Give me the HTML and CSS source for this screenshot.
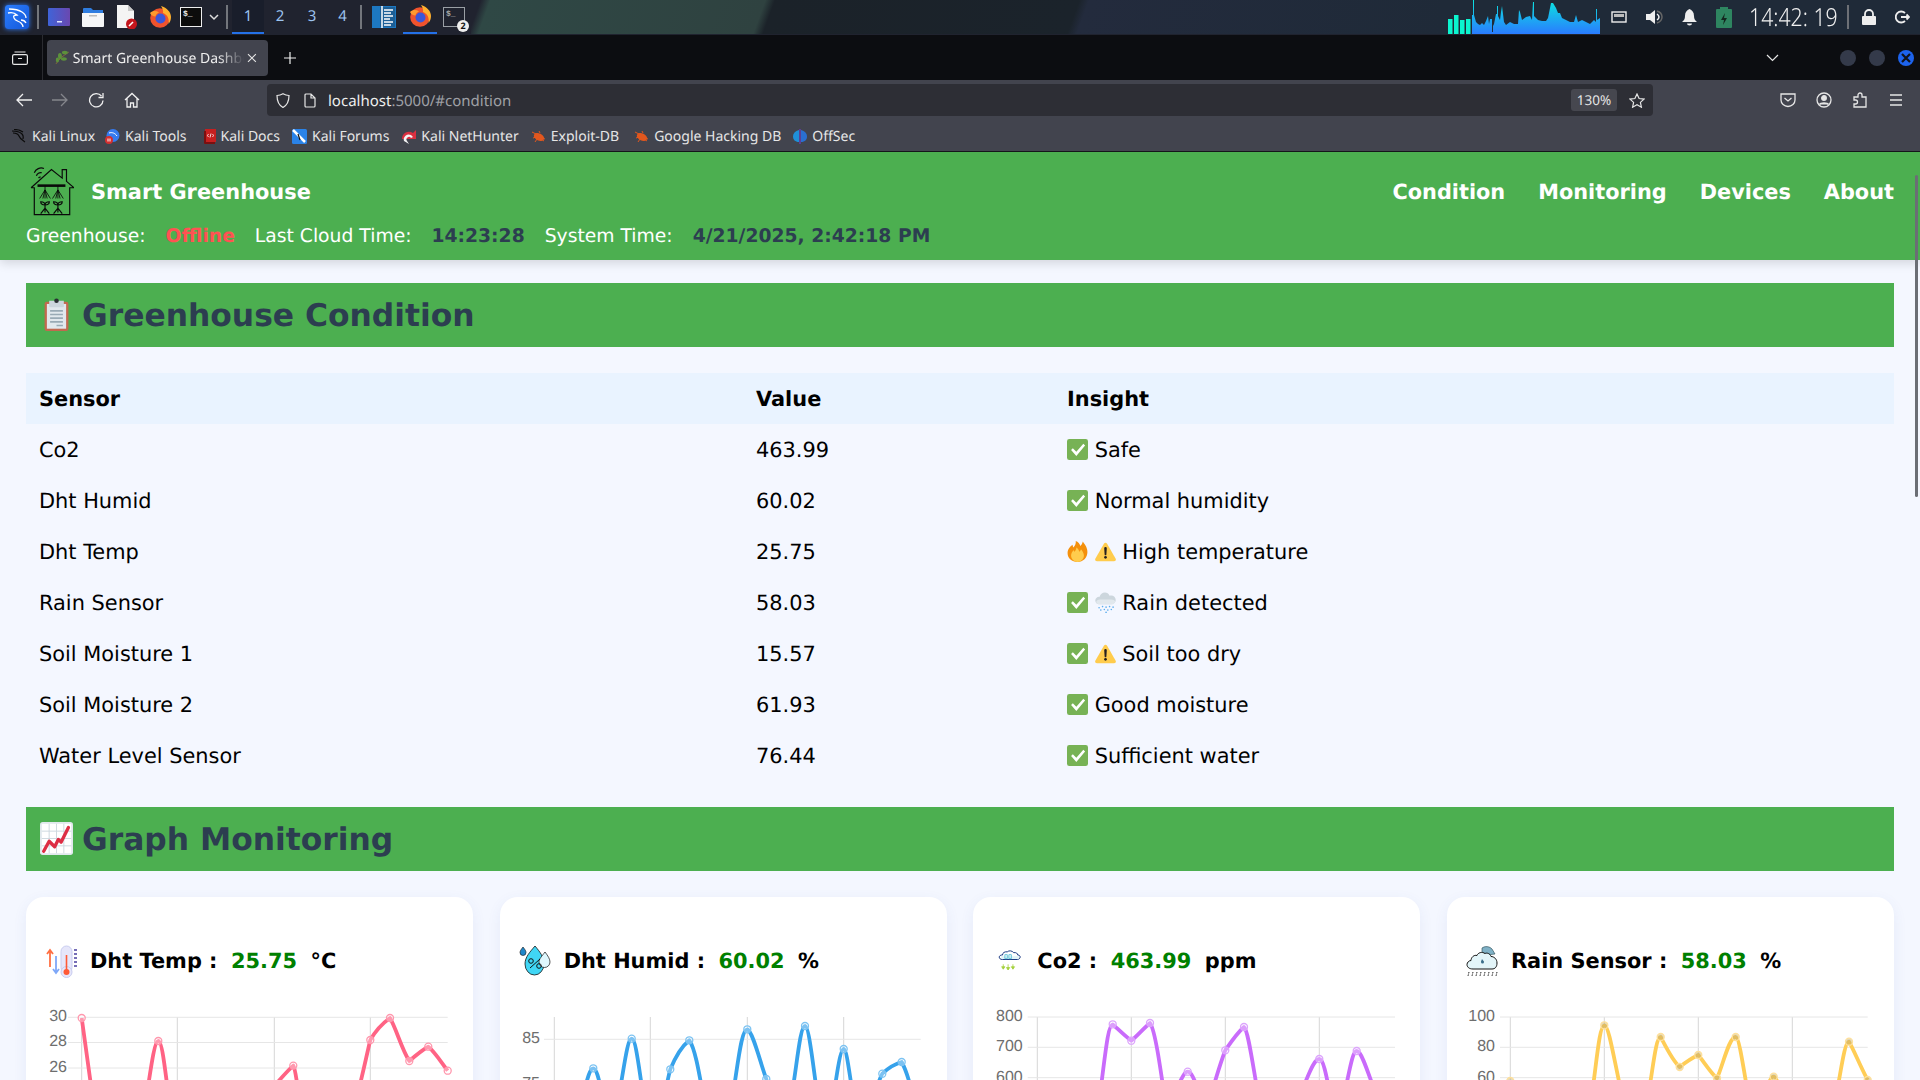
FILE: index.html
```html
<!DOCTYPE html>
<html lang="en">
<head>
<meta charset="utf-8">
<title>Smart Greenhouse Dashboard</title>
<link rel="stylesheet" href="styles.css">
</head>
<body>
<svg class="defs" width="0" height="0" aria-hidden="true">
  <defs>
    <symbol id="e-check" viewBox="0 0 36 36"><rect x="0" y="0" width="36" height="36" rx="4" fill="#77b255"/><path d="M7 19l3-3 6 6L28 8l3 3-15 18z" fill="#fff"/></symbol>
    <symbol id="e-warn" viewBox="0 0 36 36"><path d="M18 3c-1.2 0-2.2.7-3 2L.8 30c-1.4 2.6-.2 4.5 2.6 4.5h29.2c2.8 0 4-1.9 2.6-4.500L21 5c-.8-1.300-1.800-2-3-2z" fill="#ffcc4d"/><path d="M15.800 12.500a2.200 2.200 0 0 1 4.400 0L19.500 23a1.500 1.500 0 0 1-3 0z" fill="#231f20"/><circle cx="18" cy="28" r="2.300" fill="#231f20"/></symbol>
    <symbol id="e-fire" viewBox="0 0 36 36"><path d="M35 19C35 10 29 4 27 1c-.500 3-2 6-4 7.500C22 5 19 1.500 15 0c.500 4-1 8-4 11-1-1.500-1.500-3-1.500-4.500C5 10 1 14 1 21c0 8.500 7.500 15 17 15s17-7 17-17z" fill="#f4900c"/><path d="M29 25c0-5-3-8-5-11-.5 2-1.500 3.500-3 4.500-.5-3-2.500-6-5-7.500 0 3-1.500 5.500-3.500 7.500-.5-1-1-2-1-3C9 18 7 21 7 25c0 6 5 11 11 11s11-5 11-11z" fill="#ffcc4d"/></symbol>
    <symbol id="e-rain" viewBox="0 0 36 36"><path d="M28 6c-1 0-2 .2-3 .5C23.500 2.800 20.500 1 17 1c-4.500 0-8 3-9 7H7c-3.500 0-6.500 3-6.500 6.500S3.500 21 7 21h21c4 0 7.500-3.300 7.500-7.500S32 6 28 6z" fill="#ccd6dd"/><path d="M8 13c-3 0-5.500 2-6 4.500C3 19.600 5 21 7 21h21c3 0 5.700-1.900 6.900-4.500C33.800 14.500 31 13 28 13z" fill="#e1e8ed"/><g fill="#5dadec"><circle cx="7" cy="27" r="1.400"/><circle cx="13" cy="25" r="1.400"/><circle cx="19" cy="26" r="1.400"/><circle cx="25" cy="25" r="1.400"/><circle cx="31" cy="26" r="1.400"/><circle cx="10" cy="31" r="1.400"/><circle cx="16" cy="30" r="1.400"/><circle cx="22" cy="31" r="1.400"/><circle cx="28" cy="30" r="1.400"/><circle cx="19" cy="35" r="1.400"/></g></symbol>
    <symbol id="fox" viewBox="0 0 22 22"><circle cx="11" cy="12" r="9.800" fill="#f0532d"/><circle cx="11.500" cy="12.500" r="5" fill="#3b57d9"/><path d="M12 0c6 2 10 6 10 11 0 3-1 5-2.500 7 1-5-1-9.500-5.500-11 .5-2 -.5-5-2-7z" fill="#ffb02e"/><path d="M1 7c3-2.500 6-2.500 9-.5-2 1-3.500 2.500-3.500 4C4 10.500 2 9 1 7z" fill="#ff9a2e"/></symbol>
    <linearGradient id="spec" x1="0" y1="0" x2="0" y2="1"><stop offset="0" stop-color="#0be6e0"/><stop offset="1" stop-color="#2a7bff"/></linearGradient>
    <linearGradient id="desk" x1="0" x2="1"><stop offset="0" stop-color="#3f63d8"/><stop offset="1" stop-color="#6a48b0"/></linearGradient>
  </defs>
</svg>

<div class="taskbar">
  <div class="tb-left">
    <div class="slot w34"><span class="kali-box"><svg width="24" height="24" viewBox="0 0 24 24" fill="none" stroke="#fff" stroke-width="1.300"><path d="M4 4c5 0 10 1 13 3 3 2 4 5 4 6M3 8c4-1 7 0 9 2-3 0-4 1-3 3 1 3 5 3 7 5 1 1 2 3 2 4M16 15c2 0 4 1 5 3"/></svg></span></div>
    <div class="slot w8"><span class="vsep"></span></div>
    <div class="slot w34"><svg width="22" height="18" viewBox="0 0 22 18"><rect width="22" height="18" rx="1" fill="url(#desk)"/><rect x="9" y="13" width="5" height="1.500" fill="#dfe6ff"/></svg></div>
    <div class="slot w34"><svg width="22" height="20" viewBox="0 0 22 20"><path d="M1 2a1 1 0 0 1 1-1h7l2 2h10v4H1z" fill="#2f7de0"/><path d="M0 6h22v13a1 1 0 0 1-1 1H1a1 1 0 0 1-1-1z" fill="#f5f6f7"/><rect x="7" y="8" width="8" height="1.500" fill="#bbb"/></svg></div>
    <div class="slot w33"><svg width="22" height="24" viewBox="0 0 22 24"><path d="M1 0h11l6 6v17H1z" fill="#f4f4f4"/><path d="M12 0l6 6h-6z" fill="#c9c9c9"/><circle cx="15.500" cy="19" r="5.500" fill="#c4161c"/><path d="M13 21l4-4" stroke="#fff" stroke-width="1.600"/></svg></div>
    <div class="slot w33"><svg width="22" height="22"><use href="#fox"/></svg></div>
    <div class="slot w30"><span class="term">$_</span></div>
    <div class="slot w16"><svg width="10" height="8" viewBox="0 0 10 8" fill="none" stroke="#ddd" stroke-width="1.500"><path d="M1 2l4 4 4-4"/></svg></div>
    <div class="slot w10"><span class="vsep"></span></div>
    <div class="wsp active">1</div>
    <div class="wsp">2</div>
    <div class="wsp">3</div>
    <div class="wsp wsp4">4</div>
    <div class="slot w8"><span class="vsep"></span></div>
    <div class="slot w38"><svg width="24" height="22" viewBox="0 0 24 22"><rect width="24" height="22" fill="#1d78c1"/><rect x="8" y="1" width="15" height="20" fill="#1d5f96"/><path d="M10 0v22" stroke="#fff" stroke-width="1.500"/><path d="M12 4h9M12 7h7M12 10h9M12 13h6M12 16h9M12 19h7" stroke="#fff" stroke-width="1.300"/></svg></div>
    <div class="slot w34 running"><svg width="22" height="22"><use href="#fox"/></svg></div>
    <div class="slot w34 term-group"><span class="term dim">$_</span><span class="badge">2</span></div>
  </div>
  <div class="wall"></div>
  <div class="tb-right">
    <svg class="bars" width="152" height="34" viewBox="1448 0 152 34">
      <g fill="#0bf5cf"><rect x="1448" y="19" width="4.500" height="15"/><rect x="1454" y="15" width="4.500" height="19"/><rect x="1460" y="20" width="4.500" height="14"/><rect x="1466" y="19" width="4.500" height="15"/></g>
      <polygon fill="url(#spec)" points="1472,34 1472,15 1473,15 1473,0 1474,0 1474,15 1476,22 1478,24 1480,25 1482,23 1484,25 1486,21 1488,16 1489,24 1490,19 1492,19 1492,32 1493,32 1493,26 1494,24 1496,14 1497,14 1497,6 1498,6 1498,16 1500,20 1501,12 1502,6 1503,14 1504,22 1506,25 1510,22 1514,24 1518,24 1519,10 1520,12 1522,20 1526,17 1530,16 1532,20 1533,2 1534,2 1534,16 1538,20 1542,21 1546,21 1548,18 1550,8 1551,3 1553,3 1556,8 1558,13 1560,13 1562,18 1566,20 1570,22 1574,22 1576,15 1578,22 1582,20 1586,22 1590,24 1594,20 1596,22 1596,9 1597,9 1597,20 1600,18 1600,34"/>
    </svg>
    <svg class="ti n1" width="16" height="13" viewBox="0 0 16 13"><rect x="1" y="1" width="14" height="10" fill="none" stroke="#eee" stroke-width="1.400"/><path d="M3 3h10v3H3z" fill="#bbb"/></svg>
    <svg class="ti n2" width="18" height="16" viewBox="0 0 18 16"><path d="M0 5h4l5-4v14l-5-4H0z" fill="#eee"/><path d="M11 2c3 1 5 3 5 6s-2 5-5 6" fill="none" stroke="#666" stroke-width="1.500"/><path d="M11 5c1 .7 2 1.700 2 3s-1 2.300-2 3" fill="none" stroke="#eee" stroke-width="1.500"/></svg>
    <svg class="ti n3" width="15" height="17" viewBox="0 0 15 17"><path d="M7.500 0C5 1 3 3 3 7c0 3-1 4-3 6h15c-2-2-3-3-3-6 0-4-2-6-4.500-7z" fill="#eee"/><path d="M5 14.500h5a2.500 2 0 0 1-5 0z" fill="#eee"/></svg>
    <svg class="ti n4" width="16" height="21" viewBox="0 0 16 21"><rect x="0" y="2" width="16" height="19" rx="1" fill="#2e8560"/><rect x="4" y="0" width="8" height="2" fill="#2e8560"/><path d="M9 6l-4 7h3l-1 5 4-7H8z" fill="#14261f"/></svg>
    <span class="clock">14:42: 19</span>
    <span class="tsep"></span>
    <svg class="ti n5" width="14" height="16" viewBox="0 0 14 16"><rect y="7" width="14" height="9" rx="1" fill="#eee"/><path d="M3 7V5a4 4 0 0 1 8 0v2" fill="none" stroke="#eee" stroke-width="1.800"/></svg>
    <svg class="ti n6" width="15" height="14" viewBox="0 0 15 14" fill="none" stroke="#eee" stroke-width="1.800"><path d="M10 3a5.500 5.500 0 1 0 0 8"/><path d="M6 7h8M11.500 4.500L14 7l-2.500 2.500"/></svg>
  </div>
</div>

<div class="tabbar">
  <svg class="tabs-ico" width="16" height="14" viewBox="0 0 16 14" fill="none" stroke="#e6e6e6" stroke-width="1.200"><rect x=".6" y="3.600" width="14.800" height="9.800" rx="1.500"/><path d="M2.500 1h11M6 7.500h4"/></svg>
  <span class="tab-sep"></span>
  <div class="tab">
    <svg width="15" height="15" viewBox="0 0 15 15"><path d="M1 14C4 9 8 6 14 2" stroke="#8a6d3b" stroke-width="1" fill="none"/><g fill="#5c913b"><ellipse cx="5" cy="6" rx="2" ry="3"/><ellipse cx="10" cy="2.500" rx="3" ry="1.800"/><ellipse cx="9" cy="9" rx="3" ry="1.700"/><ellipse cx="2.500" cy="10" rx="1.700" ry="2.500"/></g></svg>
    <span class="tab-title">Smart Greenhouse Dashboard</span>
    <svg width="10" height="10" viewBox="0 0 10 10" stroke="#e6e6e6" stroke-width="1.100"><path d="M1 1l8 8M9 1l-8 8"/></svg>
  </div>
  <svg class="plus" width="12" height="12" viewBox="0 0 12 12" stroke="#f0f0f0" stroke-width="1.200"><path d="M6 0v12M0 6h12"/></svg>
  <div class="tab-right">
    <svg class="tab-chev" width="13" height="8" viewBox="0 0 13 8" fill="none" stroke="#e6e6e6" stroke-width="1.200"><path d="M1 1l5.500 5.500L12 1"/></svg>
    <span class="wbtn"></span>
    <span class="wbtn"></span>
    <span class="wbtn close"><svg width="10" height="10" viewBox="0 0 10 10" stroke="#10131a" stroke-width="2.200"><path d="M1 1l8 8M9 1l-8 8"/></svg></span>
  </div>
</div>

<div class="toolbar">
  <div class="nav-btns">
    <svg width="36" height="16" viewBox="0 0 36 16" fill="none" stroke="#f0f0f0" stroke-width="1.300"><path d="M26 8H11M17 2l-6 6 6 6"/></svg>
    <svg width="36" height="16" viewBox="0 0 36 16" fill="none" stroke="#85868c" stroke-width="1.300"><path d="M10 8h15M19 2l6 6-6 6"/></svg>
    <svg width="36" height="16" viewBox="0 0 36 16" fill="none" stroke="#f0f0f0" stroke-width="1.300"><path d="M23.500 4A6.700 6.700 0 1 0 25 8.500M25 1v4.500h-4.500"/></svg>
    <svg width="36" height="16" viewBox="0 0 36 16" fill="none" stroke="#f0f0f0" stroke-width="1.300"><path d="M11 8l7-6.500L25 8M13 6.500V15h3.500v-4h3v4H23V6.500"/></svg>
  </div>
  <div class="urlbar">
    <svg class="u-shield" width="14" height="15" viewBox="0 0 14 15" fill="none" stroke="#e6e6e6" stroke-width="1.200"><path d="M7 .8C5 2 3 2.500 1 2.500c0 6 1.500 9.500 6 12 4.500-2.500 6-6 6-12C11 2.500 9 2 7 .8z"/></svg>
    <svg class="u-doc" width="12" height="15" viewBox="0 0 12 15" fill="none" stroke="#e6e6e6" stroke-width="1.200"><path d="M1 2a1 1 0 0 1 1-1h5l4 4v8a1 1 0 0 1-1 1H2a1 1 0 0 1-1-1zM7 1v4h4"/></svg>
    <span class="u-text">localhost<span class="u-dim">:5000/#condition</span></span>
    <span class="zoomchip">130%</span>
    <svg class="u-star" width="16" height="15" viewBox="0 0 16 15" fill="none" stroke="#e6e6e6" stroke-width="1.200"><path d="M8 1l2.100 4.500 4.900.6-3.600 3.300 1 4.800L8 11.800 3.600 14.200l1-4.800L1 6.100l4.900-.6z"/></svg>
  </div>
  <div class="tool-right">
    <svg width="36" height="16" viewBox="0 0 36 16" fill="none" stroke="#e6e6e6" stroke-width="1.300"><path d="M11 2h14v6a7 6.500 0 0 1-14 0zM14.500 6l3.500 3 3.500-3"/></svg>
    <svg width="36" height="16" viewBox="0 0 36 16" fill="none" stroke="#e6e6e6" stroke-width="1.300"><circle cx="18" cy="8" r="7"/><circle cx="18" cy="6" r="2.300" fill="#e6e6e6"/><path d="M13.500 12.500c1-2 8-2 9 0" fill="#e6e6e6"/></svg>
    <svg width="36" height="16" viewBox="0 0 36 16" fill="none" stroke="#e6e6e6" stroke-width="1.300"><path d="M12 5h4V3a2 2 0 0 1 4 0v2h4v10H12v-3h1.500a2 2 0 0 0 0-4H12z"/></svg>
    <svg width="36" height="16" viewBox="0 0 36 16" fill="none" stroke="#e6e6e6" stroke-width="1.300"><path d="M12 3h12M12 8h12M12 13h12"/></svg>
  </div>
</div>

<div class="bookmarks">
  <span class="bm bm1"><svg width="15" height="15" viewBox="0 0 15 15" fill="none" stroke="#0b0b0b" stroke-width="1.200"><path d="M0 2c4 0 8 1 10 3 2 2 1 4 1 5M1 4c3 0 5 1 6 3 1 3 3 4 6 6M2 .5C5 .5 8 1 11 3"/></svg>Kali Linux</span>
  <span class="bm bm2"><svg width="15" height="15" viewBox="0 0 15 15"><circle cx="8" cy="6.500" r="6.500" fill="#367bf0"/><path d="M4 4c3-1 6 0 8 3" stroke="#fff" fill="none"/><circle cx="4" cy="11" r="4" fill="#d32f2f"/><path d="M3 9.500v3M5 9.500v3" stroke="#fff"/></svg>Kali Tools</span>
  <span class="bm bm3"><svg width="12" height="15" viewBox="0 0 12 15"><path d="M1 0h11v13H1z" fill="#c62020"/><path d="M0 2v12a1 1 0 0 0 1 1h10v-2H2V2z" fill="#7a1010"/><path d="M4.500 5L3.500 6.500 4.500 8M8.500 5l1 1.500-1 1.500M7 4.500L6 8.500" stroke="#fff" stroke-width=".8" fill="none"/></svg>Kali Docs</span>
  <span class="bm bm4"><svg width="15" height="15" viewBox="0 0 15 15"><rect width="15" height="15" rx="1.500" fill="#2a83e8"/><path d="M1 1l12 12" stroke="#fff" stroke-width="2.500"/><path d="M6 5l2 6" stroke="#111" stroke-width="1.200"/></svg>Kali Forums</span>
  <span class="bm bm5"><svg width="15" height="15" viewBox="0 0 15 15"><path d="M1 10a7 7 0 0 1 11-6l3-3v9z" fill="#d93040"/><path d="M3 12a5 5 0 0 1 7-6l2 2-2 1a2.500 2.500 0 0 0-4 3l2 3z" fill="#f4f4f4"/></svg>Kali NetHunter</span>
  <span class="bm bm6"><svg width="14" height="13" viewBox="0 0 14 13"><ellipse cx="7" cy="7" rx="5.500" ry="3.500" fill="#e2571e" transform="rotate(25 7 7)"/><path d="M0 2l4 2M1 8l3-1M3 12l2-3M12 11L9 9M7 1l1 2M13 9l-3-1" stroke="#e2571e"/></svg>Exploit-DB</span>
  <span class="bm bm7"><svg width="14" height="13" viewBox="0 0 14 13"><ellipse cx="7" cy="7" rx="5.500" ry="3.500" fill="#e2571e" transform="rotate(25 7 7)"/><path d="M0 2l4 2M1 8l3-1M3 12l2-3M12 11L9 9M7 1l1 2M13 9l-3-1" stroke="#e2571e"/></svg>Google Hacking DB</span>
  <span class="bm bm8"><svg width="14" height="15" viewBox="0 0 14 15"><path d="M6 1C2 2 0 4.500 0 7.500S2 13 6 13z" fill="#1f8fd8"/><path d="M8 1c4 1 6 3.500 6 6.500S12 13 8 13z" fill="#2a6fd0"/><path d="M7 0v15" stroke="#6c3fc4" stroke-width="1.200"/></svg>OffSec</span>
</div>

<div class="page">
  <header class="site-head">
    <div class="head-top">
      <div class="brand">
        <svg class="logo" width="44" height="52" viewBox="2 4 41 46" fill="none" stroke="#0a0a0a" stroke-width="1.100">
          <path d="M3 24L22 7l10 8V7h4v11l7 6M3 24h3v25h33V24h4"/>
          <path d="M9 22h26" stroke-width="2.400"/>
          <path d="M16 22v4M28 22v4M16 26l-5 8M16 26l-2 8M16 26v8M16 26l2 8M16 26l5 8M28 26l-5 8M28 26l-2 8M28 26v8M28 26l2 8M28 26l5 8" stroke-width=".8"/>
          <path d="M16 38v9M28 38v9M12 48l4-5 4 5M24 48l4-5 4 5M16 40c-2 0-4-1-4-3 2 0 4 1 4 3zM16 40c2 0 4-1 4-3-2 0-4 1-4 3zM28 40c-2 0-4-1-4-3 2 0 4 1 4 3zM28 40c2 0 4-1 4-3-2 0-4 1-4 3z"/>
          <path d="M6 10a7 7 0 0 1 9-4M8 13a4 4 0 0 1 5-3M10 15a2 2 0 0 1 2-1"/>
        </svg>
        <span class="brand-name">Smart Greenhouse</span>
      </div>
      <nav class="site-nav"><a>Condition</a><a>Monitoring</a><a>Devices</a><a>About</a></nav>
    </div>
    <div class="status">
      <span>Greenhouse:</span><b class="offline">Offline</b>
      <span>Last Cloud Time:</span><b>14:23:28</b>
      <span>System Time:</span><b>4/21/2025, 2:42:18 PM</b>
    </div>
  </header>

  <main class="content">
    <h2 class="sect">
      <svg class="h-emo" width="33" height="33" viewBox="0 0 36 36"><rect x="5" y="4" width="26" height="32" rx="2.500" fill="#c1694f"/><rect x="7.500" y="6.500" width="21" height="27" fill="#e1e8ed"/><path d="M11 14h14M11 18h14M11 22h14M11 26h14M18 30h7" stroke="#99aab5" stroke-width="1.800"/><path d="M10 3h16v6a1 1 0 0 1-1 1H11a1 1 0 0 1-1-1z" fill="#ccd6dd"/><circle cx="18" cy="3" r="2.500" fill="#292f33"/></svg>
      Greenhouse Condition
    </h2>
    <table class="sensors">
      <thead><tr><th class="c1">Sensor</th><th class="c2">Value</th><th>Insight</th></tr></thead>
      <tbody>
        <tr><td>Co2</td><td>463.99</td><td><svg class="emo"><use href="#e-check"/></svg> Safe</td></tr>
        <tr><td>Dht Humid</td><td>60.02</td><td><svg class="emo"><use href="#e-check"/></svg> Normal humidity</td></tr>
        <tr><td>Dht Temp</td><td>25.75</td><td><svg class="emo"><use href="#e-fire"/></svg> <svg class="emo"><use href="#e-warn"/></svg> High temperature</td></tr>
        <tr><td>Rain Sensor</td><td>58.03</td><td><svg class="emo"><use href="#e-check"/></svg> <svg class="emo"><use href="#e-rain"/></svg> Rain detected</td></tr>
        <tr><td>Soil Moisture 1</td><td>15.57</td><td><svg class="emo"><use href="#e-check"/></svg> <svg class="emo"><use href="#e-warn"/></svg> Soil too dry</td></tr>
        <tr><td>Soil Moisture 2</td><td>61.93</td><td><svg class="emo"><use href="#e-check"/></svg> Good moisture</td></tr>
        <tr><td>Water Level Sensor</td><td>76.44</td><td><svg class="emo"><use href="#e-check"/></svg> Sufficient water</td></tr>
      </tbody>
    </table>

    <h2 class="sect">
      <svg class="h-emo" width="33" height="33" viewBox="0 0 36 36"><rect width="36" height="36" rx="3" fill="#e1e8ed"/><rect x="2" y="2" width="32" height="32" fill="#fff"/><path d="M2 10h32M2 18h32M2 26h32M10 2v32M18 2v32M26 2v32" stroke="#ccd6dd" stroke-width="1"/><path d="M4 32l6-11 6 6 4-8 3 3 8-16" fill="none" stroke="#dd2e44" stroke-width="3.600" stroke-linejoin="round" stroke-linecap="round"/></svg>
      Graph Monitoring
    </h2>

    <div class="cards">
      <section class="card">
        <div class="card-title">
          <svg class="c-ico" width="33" height="33" viewBox="-2 0 33 33"><path d="M3 22V6M0 9l3-4 3 4" fill="none" stroke="#ff7043" stroke-width="1.800"/><path d="M9 11v16M6 24l3 4 3-4" fill="none" stroke="#7fa8f8" stroke-width="1.800"/><rect x="14" y="1" width="11" height="27" rx="5.500" fill="#e6e6fa" stroke="#c9cdf0"/><circle cx="19.500" cy="27" r="5.500" fill="#e6e6fa" stroke="#c9cdf0"/><circle cx="19.500" cy="27" r="3" fill="#ff5a36"/><path d="M19.500 10v16" stroke="#ff5a36" stroke-width="1.600"/><path d="M27 5h3M27 9h3M27 13h3M27 17h3M27 21h3" stroke="#4a3fa0" stroke-width="1.500"/></svg>
          <span class="ct-name">Dht Temp :</span><span class="ct-val">25.75</span><span class="ct-name">°C</span>
        </div>
        <svg class="chart" viewBox="0 0 447 80" width="447" height="80">
          <path class="gv" d="M55.700 17V80M151.300 17V80M248.300 17V80M344.300 17V80"/>
          <path class="gh" d="M42 17.300H421.700M42 42.500H421.700M42 68H421.700"/>
          <g class="lbl lbl-e"><text x="41" y="21">30</text><text x="41" y="46">28</text><text x="41" y="71.500">26</text></g>
          <path class="ln l-pink" d="M55.700 18L67 100M120 100C124 75 128 41 132.300 41C136 41 139 68 143 100M243 92C252 82 260 72 267.300 65.600C269 68 270 75 272 90M330 100C336 78 340 58 344.300 40C350 30 357 23 364 18C370 28 376 50 383.300 61C389 56 396 50 402.300 46.700C409 52 415 62 421.700 70.700"/>
          <g class="pts p-pink"><circle cx="55.700" cy="18" r="3.500"/><circle cx="132.300" cy="41" r="3.500"/><circle cx="267.300" cy="65.600" r="3.500"/><circle cx="344.300" cy="40" r="3.500"/><circle cx="364" cy="18" r="3.500"/><circle cx="383.300" cy="61" r="3.500"/><circle cx="402.300" cy="46.700" r="3.500"/><circle cx="421.700" cy="70.700" r="3.500"/></g>
        </svg>
      </section>

      <section class="card">
        <div class="card-title">
          <svg class="c-ico" width="33" height="33" viewBox="0 0 33 33"><path d="M4 2c2 2.500 3 4 3 5.500a3 3 0 0 1-6 0C1 6 2 4.500 4 2z" fill="#1f86c9" stroke="#111" stroke-width=".6"/><path d="M16 1c5 6 9 11 9 18a9.500 11 0 0 1-19 0C6 12 11 7 16 1z" fill="#40d6f5" stroke="#111" stroke-width=".8"/><path d="M26 7c3 4 5 7 5 10a5.500 5.500 0 0 1-11 0c0-3 3-6 6-10z" fill="#dff7fd" stroke="#111" stroke-width=".7"/><path d="M11 23l10-9" stroke="#111"/><circle cx="12" cy="16" r="2.300" fill="none" stroke="#111"/><circle cx="20" cy="21" r="2.300" fill="none" stroke="#111"/></svg>
          <span class="ct-name">Dht Humid :</span><span class="ct-val">60.02</span><span class="ct-name">%</span>
        </div>
        <svg class="chart" viewBox="0 0 447 80" width="447" height="80">
          <path class="gv" d="M54.300 17V80M150.300 17V80M247.300 17V80M343.700 17V80"/>
          <path class="gh" d="M44 39.300H420.700"/>
          <g class="lbl lbl-e"><text x="40" y="43">85</text><text x="40" y="88">75</text></g>
          <path class="ln l-blue" d="M82 100C86 85 89 68.300 93.300 68.300C97 68.300 100 85 104 100M118 100C124 70 127 38.700 131.700 38.700C136 38.700 139 70 144 100M164 100C166 88 168 78 170.300 69.300C175 58 181 47 189.300 40.300C195 48 199 72 204 100M232 100C238 65 241 29.300 247.300 29.300C253 32 260 62 266.300 79C268 85 270 95 271 100M291 100C297 65 300 26 305 26C309 26 313 65 318 100M333 100C336 80 340 49 343.700 49C347 49 350 80 354 100M374 100C376 90 379 80 382.300 73.700C388 68 395 64 401.700 62C405 68 408 76 412 92"/>
          <g class="pts p-blue"><circle cx="93.300" cy="68.300" r="3.500"/><circle cx="131.700" cy="38.700" r="3.500"/><circle cx="170.300" cy="69.300" r="3.500"/><circle cx="189.300" cy="40.300" r="3.500"/><circle cx="247.300" cy="29.300" r="3.500"/><circle cx="266.300" cy="79" r="3.500"/><circle cx="305" cy="26" r="3.500"/><circle cx="343.700" cy="49" r="3.500"/><circle cx="382.300" cy="73.700" r="3.500"/><circle cx="401.700" cy="62" r="3.500"/></g>
        </svg>
      </section>

      <section class="card">
        <div class="card-title">
          <svg class="c-ico" width="33" height="33" viewBox="-5 -3 41 41"><path d="M8 15c-3 0-4-1.500-4-3s2-3 4-2.500c0-3 3-4.500 6-4 2-2 6-1.500 8 1 3-.5 5 1 5 3 2 0 3 1 3 2.500s-1.500 3-3.500 3z" fill="#fff" stroke="#16357f" stroke-width="1.200"/><path d="M6 11h22v3H7z" fill="#dff3f8"/><path d="M11 9h3v5h-3zM16 9h3v5h-3z" fill="none" stroke="#45b7d0" stroke-width="1"/><path d="M9 21v6M15 21v7M21 21v6M9 27l-2-3h4zM15 28l-2-3h4zM21 27l-2-3h4z" fill="#a6d13d" stroke="#a6d13d" stroke-width="1"/></svg>
          <span class="ct-name">Co2 :</span><span class="ct-val">463.99</span><span class="ct-name">ppm</span>
        </div>
        <svg class="chart" viewBox="0 0 447 80" width="447" height="80">
          <path class="gv" d="M64.300 17V80M158.300 17V80M252.300 17V80M346.300 17V80"/>
          <path class="gh" d="M54.700 17H422M54.700 47.300H422M54.700 77.700H422"/>
          <g class="lbl lbl-e"><text x="49.700" y="20.500">800</text><text x="49.700" y="51">700</text><text x="49.700" y="81.500">600</text></g>
          <path class="ln l-purple" d="M126 100C131 70 134 24.300 139.700 24.300C146 30 152 36 158.300 40.700C164 36 170 29 177 23C182 30 187 65 192 100M203 90C207 82 211 71.700 214.700 71.700C218 71.700 221 78 226 92M238 95C243 78 247 64 252.300 50.300C258 42 264 33 271 27C275 30 279 60 286 100M328 92C334 80 340 59 346.300 59C350 59 353 72 358 100M371 95C376 75 379 51 383.700 51C388 51 393 66 402 92"/>
          <g class="pts p-purple"><circle cx="139.700" cy="24.300" r="3.500"/><circle cx="158.300" cy="40.700" r="3.500"/><circle cx="177" cy="23" r="3.500"/><circle cx="214.700" cy="71.700" r="3.500"/><circle cx="252.300" cy="50.300" r="3.500"/><circle cx="271" cy="27" r="3.500"/><circle cx="346.300" cy="59" r="3.500"/><circle cx="383.700" cy="51" r="3.500"/></g>
        </svg>
      </section>

      <section class="card">
        <div class="card-title">
          <svg class="c-ico" width="33" height="33" viewBox="0 0 33 33"><path d="M16 3c3-2 7-2 10 1l3 5-8 1-5-3z" fill="#7fb1c6" stroke="#26464f" stroke-width=".6"/><path d="M7 24c-4 0-6-2-6-4.500 0-2 2-4 4-4 0-3 3-6 6-5 1-3 5-4 8-2 2-1 5 0 6 3 3 0 6 2.500 6 6.500s-2 6-5 6z" fill="#e3f5f9" stroke="#111" stroke-width="1"/><path d="M16 14c1 1.500 2 2 2 3a1.500 1.500 0 0 1-3 0c0-1 .5-1.500 1-3z" fill="#3b6e8a"/><path d="M3 27l-1 4M7 27l-1 4M11 27l-1 4M15 27l-1 4M19 27l-1 4M23 27l-1 4M27 27l-1 4M31 27l-1 4" stroke="#222" stroke-width="1" stroke-dasharray="1.500 1"/></svg>
          <span class="ct-name">Rain Sensor :</span><span class="ct-val">58.03</span><span class="ct-name">%</span>
        </div>
        <svg class="chart" viewBox="0 0 447 80" width="447" height="80">
          <path class="gv" d="M63.300 17V80M157.300 17V80M251.300 17V80M345.300 17V80"/>
          <path class="gh" d="M53 17H420.700M53 47.300H420.700M53 77.700H420.700"/>
          <g class="lbl lbl-e"><text x="48" y="20.500">100</text><text x="48" y="51">80</text><text x="48" y="81.500">60</text></g>
          <path class="ln l-yellow" d="M144 100C149 70 152 25.300 157.300 25.300C162 25.300 167 60 176 100M200 100C205 80 208 37 213.700 37C218 45 225 60 232.700 67C239 62 245 58 251.300 55C257 62 263 72 270 78.300C276 65 282 37 288.700 37C292 37 296 65 302 100M318 92C321 84 324 76.700 326.700 76.700C329 76.700 332 84 335 92M388 100C393 80 397 41.700 402 41.700C407 50 413 66 420.700 80"/>
          <g class="pts p-yellow"><circle cx="63.300" cy="81" r="3.500"/><circle cx="157.300" cy="25.300" r="3.500"/><circle cx="213.700" cy="37" r="3.500"/><circle cx="232.700" cy="67" r="3.500"/><circle cx="251.300" cy="55" r="3.500"/><circle cx="270" cy="78.300" r="3.500"/><circle cx="288.700" cy="37" r="3.500"/><circle cx="326.700" cy="76.700" r="3.500"/><circle cx="402" cy="41.700" r="3.500"/><circle cx="420.700" cy="80" r="3.500"/></g>
        </svg>
      </section>
    </div>
  </main>
  <div class="scrollthumb"></div>
</div>
</body>
</html>
```

FILE: styles.css
```css
* { box-sizing: border-box; }
html, body { margin: 0; height: 100%; overflow: hidden; }
body { background: #f4f7ff; font-family: "DejaVu Sans", sans-serif; color: #000; display: flex; flex-direction: column; text-rendering: geometricPrecision; }
.defs { position: absolute; }

/* taskbar */
.taskbar { display: flex; height: 35px; flex: none; background: #20232f; font-family: "Noto Sans", sans-serif; }
.tb-left { display: flex; height: 34px; flex: none; }
.slot { display: flex; align-items: center; justify-content: center; height: 34px; position: relative; }
.w8 { width: 8px; } .w10 { width: 10px; } .w16 { width: 16px; } .w30 { width: 30px; }
.w33 { width: 33px; } .w34 { width: 34px; } .w38 { width: 38px; }
.kali-box { width: 24px; height: 24px; border-radius: 3px; background: linear-gradient(135deg, #2a7dff, #1558d8); box-shadow: 0 0 5px #2f7dff; display: flex; }
.vsep { width: 2px; height: 24px; background: #73767c; }
.term { width: 22px; height: 20px; background: #0c0c0c; border: 1px solid #eee; color: #eee; font: 700 8px/14px "Liberation Mono", monospace; padding-left: 2px; }
.term.dim { background: transparent; border-color: #9a9fa5; color: #aaa; }
.term-group { justify-content: flex-start; padding-left: 6px; }
.badge { position: absolute; left: 20px; top: 20px; width: 12px; height: 12px; border-radius: 50%; background: #eee; color: #111; font: 700 9px/12px "Noto Sans", sans-serif; text-align: center; }
.wsp { width: 32px; height: 34px; color: #9dc4f0; font-size: 15px; line-height: 33px; text-align: center; }
.wsp.active { background: #191e2b; border-bottom: 2px solid #2471e8; }
.wsp4 { width: 29px; }
.running { border-bottom: 2px solid #2471e8; }
.wall { flex: 1; height: 34px; background: linear-gradient(110deg, #20232f 0, #20232f 1%, #2f4845 2%, #2f4240 30%, #1b2229 31%, #1b232b 62%, #232b3d 63%, #1f2a38 100%); }
.tb-right { display: flex; align-items: center; height: 34px; width: 480px; flex: none; background: #1f2a38; padding: 0 8px 0 8px; position: relative; }
.bars { flex: none; align-self: flex-start; }
.ti { flex: none; }
.n1 { margin-left: 11px; } .n2 { margin-left: 19px; } .n3 { margin-left: 18px; } .n4 { margin-left: 19px; }
.n5 { margin-left: 13px; } .n6 { margin-left: 19px; }
.clock { width: 86px; margin-left: 17px; flex: none; color: #f0f0f0; font: 300 25px/34px "Noto Sans", sans-serif; white-space: nowrap; transform: scaleX(.85); transform-origin: 0 50%; }
.tsep { width: 2px; height: 24px; background: #6d7076; margin-left: 12px; flex: none; }

/* tabs */
.tabbar { display: flex; align-items: center; height: 45px; flex: none; background: #0c0d11; position: relative; font-family: "Noto Sans", sans-serif; }
.tabs-ico { margin-left: 12px; }
.tab-sep { width: 1px; height: 45px; background: #2a2b30; margin-left: 14px; }
.tab { display: flex; align-items: center; width: 221px; height: 36px; margin-left: 4px; padding: 0 11px 0 8px; background: #42444e; border-radius: 4px; gap: 3px; color: #eee; font-size: 14px; }
.tab-title { width: 174px; padding-top: 1px; overflow: hidden; white-space: nowrap; -webkit-mask-image: linear-gradient(90deg, #000 85%, transparent); mask-image: linear-gradient(90deg, #000 85%, transparent); }
.plus { margin-left: 16px; }
.tab-right { margin-left: auto; display: flex; align-items: center; gap: 13px; padding-right: 6px; }
.tab-chev { margin-right: 48px; }
.wbtn { width: 16px; height: 16px; border-radius: 50%; background: #343a4a; display: flex; align-items: center; justify-content: center; }
.wbtn.close { background: #1d63ed; }

/* toolbar */
.toolbar { display: flex; height: 44px; flex: none; background: #42444e; padding: 4px 0 0 6px; font-family: "Noto Sans", sans-serif; }
.nav-btns { display: flex; align-items: center; height: 32px; width: 261px; flex: none; }
.urlbar { display: flex; align-items: center; width: 1386px; height: 32px; background: #2d2e35; border-radius: 4px; color: #eee; font-size: 15px; padding: 0 6px 0 9px; flex: none; }
.u-doc { margin-left: 14px; }
.u-text { margin-left: 12px; padding-top: 2px; }
.u-dim { color: #9fa0a5; }
.zoomchip { margin-left: auto; width: 46px; height: 22px; background: #46474f; border-radius: 3px; color: #e6e6e6; font-size: 13.500px; line-height: 22px; text-align: center; }
.u-star { margin: 0 2px 0 12px; }
.tool-right { display: flex; align-items: center; height: 32px; margin-left: 117px; flex: none; }

/* bookmarks */
.bookmarks { display: flex; align-items: center; height: 28px; flex: none; background: #42444e; border-bottom: 1px solid #14151a; padding: 0 0 2px 12px; color: #e6e6e6; font: 14px "Noto Sans", sans-serif; }
.bm { display: flex; align-items: center; gap: 5px; margin-right: 12px; white-space: nowrap; }
.bm1 { margin-right: 10px; } .bm2 { margin-right: 17px; } .bm5 { margin-right: 13px; } .bm6 { margin-right: 16px; } .bm7 { margin-right: 12px; }

/* page */
.page { flex: 1; min-height: 0; overflow: hidden; background: #f4f7ff; position: relative; }
.site-head { height: 108px; background: #4caf50; padding: 0 26px; box-shadow: 0 3px 10px rgba(0, 0, 0, .14); position: relative; color: #fff; }
.head-top { display: flex; align-items: center; justify-content: space-between; height: 76px; padding-top: 4px; }
.brand { display: flex; align-items: center; gap: 17px; padding-left: 4px; }
.logo { flex: none; margin-top: -3px; }
.brand-name { font-size: 20.900px; font-weight: 700; }
.site-nav { display: flex; gap: 33px; }
.site-nav a { font-size: 20.850px; font-weight: 700; color: #fff; }
.status { display: flex; gap: 20px; font-size: 18.740px; line-height: 24px; margin-top: -3px; }
.status b { color: #2c3e50; }
.status b.offline { color: #ff5252; }

.content { padding: 23px 26px 0; }
.sect { display: flex; align-items: center; gap: 9px; height: 64px; margin: 0; padding: 2px 0 0 14px; background: #4caf50; color: #2c3e50; font-size: 31.350px; font-weight: 700; }
.h-emo { flex: none; margin-bottom: 4px; }
.sensors { width: 100%; border-collapse: collapse; margin: 26px 0; font-size: 20.900px; table-layout: fixed; }
.sensors th { background: #e9f3ff; text-align: left; font-weight: 700; }
.sensors th, .sensors td { height: 51px; padding: 0 13px; }
.c1 { width: 717px; }
.c2 { width: 311px; }
.emo { width: 21px; height: 21px; vertical-align: -3px; }

.cards { display: grid; grid-template-columns: repeat(4, 447px); justify-content: space-between; margin-top: 26px; }
.card { height: 300px; background: #fff; border-radius: 18px; box-shadow: 0 4px 14px rgba(60, 90, 180, .08); padding: 46px 0 0; }
.card-title { display: flex; align-items: center; height: 36px; padding-left: 19px; font-size: 20.900px; font-weight: 700; }
.c-ico { flex: none; margin-right: 12px; }
.ct-val { color: #008000; margin: 0 13.500px; }
.chart { display: block; margin-top: 21px; overflow: hidden; }
.gv { stroke: #d6d6d6; stroke-width: 1; fill: none; }
.gh { stroke: #e6e6e6; stroke-width: 1; fill: none; }
.lbl { font: 16px "Liberation Sans", sans-serif; fill: #6e6e6e; }
.lbl-e { text-anchor: end; }
.ln { fill: none; stroke-width: 3.800; stroke-linejoin: round; }
.l-pink { stroke: #ff6384; } .l-blue { stroke: #36a2eb; } .l-purple { stroke: #c96bfb; } .l-yellow { stroke: #ffcd56; }
.pts circle { stroke-width: 1.300; fill: rgba(255, 255, 255, .35); }
.p-pink circle { stroke: #ff97ad; } .p-blue circle { stroke: #7cc3f2; } .p-purple circle { stroke: #dca4fc; } .p-yellow circle { stroke: #ffe09a; }
.p-yellow circle { fill: rgba(190, 170, 110, .45); }
.scrollthumb { position: absolute; right: 2px; top: 23px; width: 3px; height: 322px; background: #6b6e75; border-radius: 2px; }
```
